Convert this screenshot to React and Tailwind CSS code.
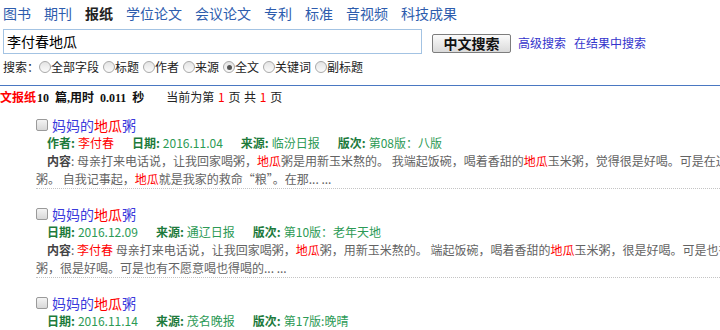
import React from 'react'

const navItems = ['图书', '期刊', '报纸', '学位论文', '会议论文', '专利', '标准', '音视频', '科技成果']
const fields = ['全部字段', '标题', '作者', '来源', '全文', '关键词', '副标题']

function Radio({ checked }) {
  return (
    <span className="inline-flex items-center justify-center w-[12px] h-[12px] rounded-full border border-[#a9a9a9] bg-gradient-to-b from-[#e4e4e4] to-[#fbfbfb]">
      {checked && <span className="w-[5px] h-[5px] rounded-full bg-[#555]" />}
    </span>
  )
}

function Checkbox() {
  return (
    <span className="inline-block w-[12px] h-[12px] rounded-[2px] border border-[#9a9a9a] bg-gradient-to-b from-[#f4f4f4] to-[#d8d8d8]" />
  )
}

function Red({ children }) {
  return <span className="text-[#ff0000]">{children}</span>
}

// label + value pair of the green meta line
function Meta({ label, children }) {
  return (
    <span className="mr-[18px]">
      <b className="text-[#1d7a3b]">{label}:</b>
      <span className="ml-[3px] text-[#2c9a55]">{children}</span>
    </span>
  )
}

function Result({ meta, line1, line2, first }) {
  return (
    <div className={(first ? 'mt-[10px] ' : 'mt-[16px] ') + 'ml-[36px] w-[760px] border-b border-dotted border-[#c4c4c4]'}>
      <div className="flex items-center h-[18px]">
        <Checkbox />
        <span className="ml-[4px] text-[14px] text-[#3a3adc] leading-[18px]">
          妈妈的<Red>地瓜</Red>粥
        </span>
      </div>
      <div className="pl-[11px] h-[18px] leading-[18px] text-[12px] whitespace-nowrap">{meta}</div>
      <div className="text-[12px] leading-[18px] text-[#636363] whitespace-nowrap">
        <div className="pl-[11px]">
          <b className="text-[#444]">内容</b>: {line1}
        </div>
        <div>{line2}</div>
      </div>
    </div>
  )
}

export default function App() {
  return (
    <div className="w-[720px] h-[330px] overflow-hidden bg-white font-['Noto_Sans_CJK_SC',sans-serif] text-black">
      <div className="pl-[3px]">
        {/* top nav */}
        <div className="flex gap-[13px] pt-[4px] h-[22px] text-[14px] leading-[18px]">
          {navItems.map(n => (
            <span key={n} className={n === '报纸' ? 'font-bold text-[#222]' : 'text-[#2d5cad]'}>{n}</span>
          ))}
        </div>

        {/* search box */}
        <div className="flex items-start mt-[7px]">
          <div className="w-[419px] h-[25px] border border-[#a3c3e3] pl-[3px] text-[14px] leading-[23px]">李付春地瓜</div>
          <button className="ml-[10px] mt-[5px] w-[79px] h-[19px] border border-[#7d7d7d] rounded-[2px] bg-gradient-to-b from-[#fbfbfb] to-[#dadada] text-[14px] font-bold leading-[17px] text-[#111]">
            中文搜索
          </button>
          <span className="ml-[7px] mt-[6px] text-[12px] leading-[16px] text-[#3434cc]">高级搜索</span>
          <span className="ml-[8px] mt-[6px] text-[12px] leading-[16px] text-[#3434cc]">在结果中搜索</span>
        </div>

        {/* field radios */}
        <div className="flex items-center mt-[4px] h-[18px] text-[12px] leading-[18px] text-[#222]">
          <span>搜索：</span>
          {fields.map((f, i) => (
            <span key={f} className={'flex items-center ' + (i === 0 ? '' : 'ml-[4px]')}>
              <Radio checked={f === '全文'} />
              <span>{f}</span>
            </span>
          ))}
        </div>
      </div>

      <div className="mt-[9px] h-[1px] bg-[#4a78c2]" />

      {/* result summary */}
      <div className="mt-[2px] h-[18px] text-[12px] leading-[18px] whitespace-nowrap">
        <b className="-ml-[12px] text-[#ff0000]">中文报纸</b>
        <b className="ml-[1px] font-['Liberation_Serif','Noto_Sans_CJK_SC',serif] text-[#111] [word-spacing:3px]">10 篇,用时 0.011 秒</b>
        <span className="ml-[22px] text-[#222] [word-spacing:1px]">当前为第 <Red>1</Red> 页 共 <Red>1</Red> 页</span>
      </div>

      <Result
        first
        meta={<>
          <Meta label="作者"><Red>李付春</Red></Meta>
          <Meta label="日期">2016.11.04</Meta>
          <Meta label="来源">临汾日报</Meta>
          <Meta label="版次">第08版：八版</Meta>
        </>}
        line1={<>母亲打来电话说，让我回家喝粥，<Red>地瓜</Red>粥是用新玉米熬的。 我端起饭碗，喝着香甜的<Red>地瓜</Red>玉米粥，觉得很是好喝。可是在过去，我家的</>}
        line2={<>粥。 自我记事起，<Red>地瓜</Red>就是我家的救命“粮”。在那... ...</>}
      />
      <Result
        meta={<>
          <Meta label="日期">2016.12.09</Meta>
          <Meta label="来源">通辽日报</Meta>
          <Meta label="版次">第10版：老年天地</Meta>
        </>}
        line1={<><Red>李付春</Red> 母亲打来电话说，让我回家喝粥，<Red>地瓜</Red>粥，用新玉米熬的。 端起饭碗，喝着香甜的<Red>地瓜</Red>玉米粥，很是好喝。可是也有不愿意喝的</>}
        line2={<>粥，很是好喝。可是也有不愿意喝也得喝的... ...</>}
      />
      <Result
        meta={<>
          <Meta label="日期">2016.11.14</Meta>
          <Meta label="来源">茂名晚报</Meta>
          <Meta label="版次">第17版:晚晴</Meta>
        </>}
        line1={<>母亲打来电话说，让我回家喝粥</>}
        line2={<>粥</>}
      />
    </div>
  )
}
